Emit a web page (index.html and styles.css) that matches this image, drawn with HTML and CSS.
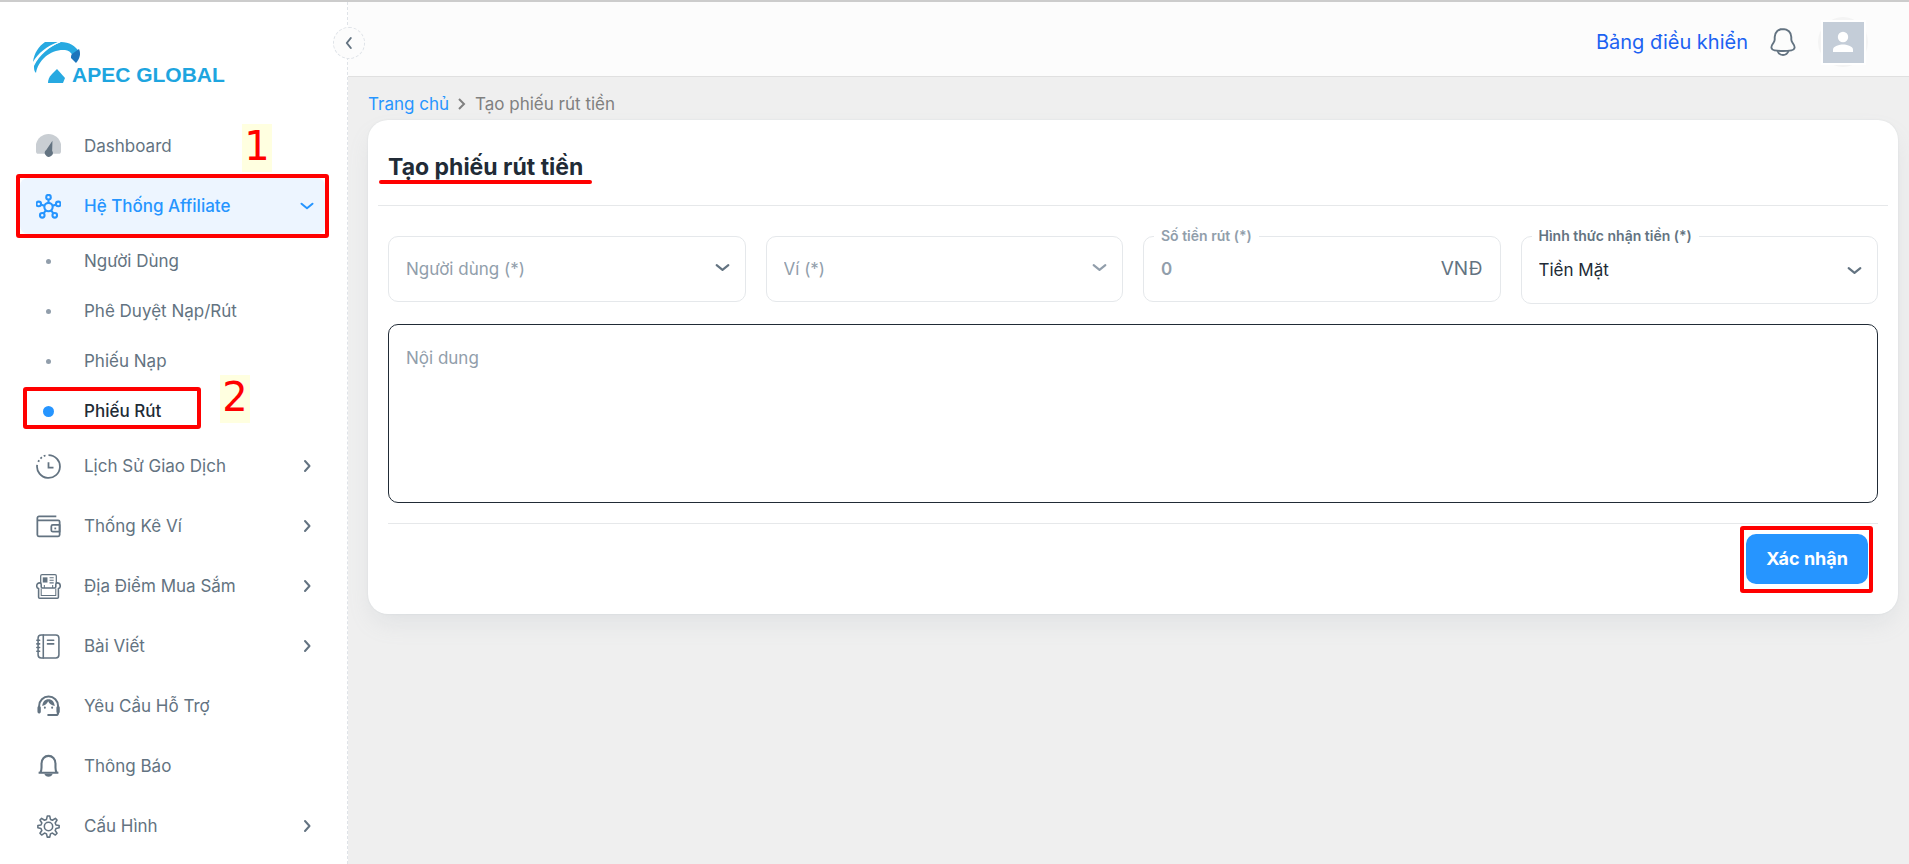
FILE: index.html
```html
<!DOCTYPE html>
<html lang="vi">
<head>
<meta charset="utf-8">
<meta name="viewport" content="width=device-width, initial-scale=1">
<title>Tạo phiếu rút tiền</title>
<link rel="stylesheet" href="styles.css">
</head>
<body>
<svg class="defs" aria-hidden="true">
  <symbol id="chev" viewBox="0 0 16 16"><path d="M6 3l4.500 5L6 13" fill="none" stroke="currentColor" stroke-width="2" stroke-linecap="round" stroke-linejoin="round"/></symbol>
  <symbol id="down" viewBox="0 0 16 16"><path d="M2.500 5.700L8 10.200l5.500-4.500" fill="none" stroke="currentColor" stroke-width="2" stroke-linecap="round" stroke-linejoin="round"/></symbol>
</svg>
<div class="app">
  <aside class="sidebar">
    <button class="collapse" type="button" aria-label="Thu gọn"><svg viewBox="0 0 16 16"><path d="M9.800 3L5.800 8l4 5" fill="none" stroke="currentColor" stroke-width="2" stroke-linecap="round" stroke-linejoin="round"/></svg></button>
    <a class="logo" href="#">
      <svg viewBox="0 0 50 42" aria-hidden="true">
        <path d="M0 20C1 11 6 4 12 0h13C14 4 5 11 0 20z" fill="#27a9e1"/>
        <path d="M1 24C6 13 17 4 28 0c8 0 15 4 18 10l-6 4C38 10 35 8 32 8 18 7 5 18 3 31 1 29 1 27 1 24z" fill="#27a9e1"/>
        <path d="M1 22C7 11 16 4 27 0" fill="none" stroke="#fff" stroke-width="1"/>
        <path d="M46 7c2 5 1 9-3 14l-5-5c0-2 0-3 1-4z" fill="#1c75bc"/>
        <path d="M24 27l8 9-2 5H15c0-3 1-6 4-9z" fill="#27a9e1"/>
      </svg>
      <span>APEC GLOBAL</span>
    </a>
    <nav>
      <ul class="menu">
        <li><a class="item" href="#">
          <svg class="icon" viewBox="0 0 24 24"><path d="M1.300 19A2 2 0 0 1 .2 17.800C-2.500 8.500 3.500 0 12 0s14.500 8.500 11.800 17.800a2 2 0 0 1-1.100 1.200z" fill="#c9ced3"/><path d="M15.800 6.500l-.3 9.500a3.800 3.800 0 1 1-5.500-1z" fill="#637381"/></svg>
          <span>Dashboard</span></a><b class="note note-one">1</b></li>
        <li><a class="item active" href="#">
          <svg class="icon" viewBox="0 0 24 24" fill="none" stroke="currentColor" stroke-width="2"><circle cx="12" cy="12.500" r="4"/><circle cx="12" cy="3" r="2.200"/><circle cx="2.600" cy="9.500" r="2.200"/><circle cx="21.400" cy="9.500" r="2.200"/><circle cx="6" cy="20.500" r="2.200"/><circle cx="18" cy="20.500" r="2.200"/><path d="M12 5.200v3.300M5 10.300l3.200 1M19 10.300l-3.200 1M7.300 18.700l2.200-3M16.700 18.700l-2.200-3"/></svg>
          <span>Hệ Thống Affiliate</span><svg class="arrow"><use href="#down"/></svg></a><i class="mark mark-group"></i>
          <ul class="sub">
            <li><a href="#"><i class="dot"></i><span>Người Dùng</span></a></li>
            <li><a href="#"><i class="dot"></i><span>Phê Duyệt Nạp/Rút</span></a></li>
            <li><a href="#"><i class="dot"></i><span>Phiếu Nạp</span></a></li>
            <li><a class="current" href="#"><i class="dot"></i><span>Phiếu Rút</span></a><i class="mark mark-child"></i><b class="note note-two">2</b></li>
          </ul>
        </li>
        <li><a class="item" href="#">
          <svg class="icon" viewBox="0 0 24 24" fill="none" stroke="currentColor" stroke-width="1.700"><path d="M12 1a11 11 0 1 1-10.900 9.500"/><path d="M2.200 7.500A11 11 0 0 1 10 1.200" stroke-dasharray="1.800 2"/><path d="M12 8v5h4.800"/></svg>
          <span>Lịch Sử Giao Dịch</span><svg class="arrow"><use href="#chev"/></svg></a></li>
        <li><a class="item" href="#">
          <svg class="icon" viewBox="0 0 24 24" fill="none" stroke="currentColor" stroke-width="1.700" stroke-linejoin="round"><path d="M19.500 2.300H3A1.600 1.600 0 0 0 1.300 4v16c0 .8.600 1.400 1.400 1.400h18.600c.8 0 1.400-.6 1.400-1.400V7.500c0-.8-.6-1.400-1.400-1.400H1.500"/><path d="M22.700 10.500h-6.500c-.9 0-1.500.6-1.500 1.500v3.500c0 .9.600 1.500 1.500 1.500h6.500z"/><path d="M18.500 13v1.700"/></svg>
          <span>Thống Kê Ví</span><svg class="arrow"><use href="#chev"/></svg></a></li>
        <li><a class="item" href="#">
          <svg class="icon" viewBox="0 0 24 24" fill="none" stroke="currentColor" stroke-width="1.500" stroke-linejoin="round"><path d="M4.500 9V2c0-.8.500-1.300 1.300-1.300h12.500c.7 0 1.200.5 1.200 1.300v7" stroke-width="1.200"/><path d="M3.500 23.200h17c.6 0 1-.5 1-1V14c1.200-.4 1.800-1.300 1.800-2.500 0-2-1.300-3-3-3-.8 0-1.300.7-1.300 1.600v2.200c0 .8-.5 1.200-1.200 1.200H6.200c-.7 0-1.200-.4-1.200-1.200v-2.200C5 9.200 4.500 8.500 3.700 8.500c-1.700 0-3 1-3 3 0 1.200.6 2.100 1.800 2.500v8.200c0 .5.400 1 1 1z"/><path d="M5 14v6.700h14V14M8 10.500v3M16 10.500v3M13 3.500h4M13 6h4M13 8.500h4" stroke-width="1"/><path d="M6.500 3.200h4.500v5H6.500z" fill="currentColor" stroke="none"/></svg>
          <span>Địa Điểm Mua Sắm</span><svg class="arrow"><use href="#chev"/></svg></a></li>
        <li><a class="item" href="#">
          <svg class="icon" viewBox="0 0 24 24" fill="none" stroke="currentColor" stroke-width="1.500" stroke-linecap="round"><rect x="2" y="1" width="20" height="22" rx="3"/><path d="M7 1v22M11 6h6M11 9.500h6M.8 6h2.700M.8 9.500h2.700M.8 13h2.700M.8 16.500h2.700"/></svg>
          <span>Bài Viết</span><svg class="arrow"><use href="#chev"/></svg></a></li>
        <li><a class="item" href="#">
          <svg class="icon" viewBox="0 0 24 24" fill="none" stroke="currentColor" stroke-width="1.900" stroke-linecap="round"><path d="M3 17.500V11.500a9 9 0 0 1 18.200 0v6.700c0 1.300-.7 2-2 2h-7.500"/><path d="M3 13v4M21.200 13v4" stroke-width="3.200"/><path d="M6 11.500c3-.8 4.800-2.300 5.700-4.500 1 2.300 3 3.800 6.300 4.500-.5-4-2.500-6.500-6-6.500s-5.600 2.500-6 6.500z" fill="currentColor" stroke="none"/><path d="M8.500 13v.3M15.500 13v.3"/></svg>
          <span>Yêu Cầu Hỗ Trợ</span></a></li>
        <li><a class="item" href="#">
          <svg class="icon" viewBox="0 0 24 24" fill="none" stroke="currentColor" stroke-width="2" stroke-linejoin="round"><path d="M4 18c1.200-1.200 1.300-3 1.300-5V9.300c0-4.500 3-7.500 6.700-7.500s6.700 3 6.700 7.500V13c0 2 .1 3.800 1.300 5M2.500 18h19"/><path d="M8 19h8c-.6 1.800-2 2.800-4 2.800S8.600 20.800 8 19z" fill="currentColor" stroke="none"/></svg>
          <span>Thông Báo</span></a></li>
        <li><a class="item" href="#">
          <svg class="icon" viewBox="0 0 24 24" fill="none" stroke="currentColor" stroke-width="1.500" stroke-linejoin="round"><circle cx="12" cy="12" r="4"/><path d="M10.800 2h2.400l.7 3.200 1.900.8 2.800-1.800 1.600 1.600L18.400 8.600l.8 1.900 3 .6v2.200l-3 .6-.8 1.900 1.800 2.700-1.600 1.700-2.800-1.900-1.900.8-.7 3.100h-2.400l-.7-3.100-1.900-.8-2.800 1.900-1.600-1.700 1.800-2.700-.8-1.900-3-.6v-2.200l3-.6.8-1.900-1.800-2.800 1.600-1.600L8.200 6l1.900-.8z"/></svg>
          <span>Cấu Hình</span><svg class="arrow"><use href="#chev"/></svg></a></li>
      </ul>
    </nav>
  </aside>
  <div class="page">
    <header class="topbar">
      <a class="dash" href="#">Bảng điều khiển</a>
      <button class="bell" type="button" aria-label="Thông báo"><svg viewBox="0 0 26 28" fill="none" stroke="currentColor" stroke-width="1.900" stroke-linejoin="round"><path d="M13 1c-4.700 0-8.300 3.300-8.300 8v2.500c0 1.200-.5 2.200-1.200 3.200C2.200 16.500 1 18 1.500 20c.4 1.500 1.500 2.200 3 2.400 5.500.7 11.500.7 17 0 1.500-.2 2.600-.9 3-2.400.5-2-.7-3.500-2-5.300-.7-1-1.200-2-1.200-3.200V9c0-4.700-3.600-8-8.300-8z"/><path d="M7.500 23c1 2.700 3 4 5.500 4s4.500-1.300 5.500-4"/></svg></button>
      <button class="avatar" type="button" aria-label="Tài khoản"><svg viewBox="0 0 41 41"><path d="M0 0h41v41H0z" fill="#c4cdd8"/><circle cx="20" cy="15" r="5.200" fill="#fff"/><path d="M10 30v-2.500c0-3.300 6.700-5 10-5s10 1.700 10 5V30z" fill="#fff"/></svg></button>
    </header>
    <main class="content">
      <nav class="crumbs" aria-label="Đường dẫn">
        <a href="#">Trang chủ</a>
        <svg viewBox="0 0 16 16"><path d="M5 3l5 5-5 5" fill="none" stroke="currentColor" stroke-width="2"/></svg>
        <span>Tạo phiếu rút tiền</span>
      </nav>
      <form class="card">
        <div class="card-head"><h1>Tạo phiếu rút tiền</h1></div>
        <div class="card-body">
          <div class="fields">
            <div class="field">
              <select id="user" aria-label="Người dùng (*)"><option>Người dùng (*)</option></select>
              <svg class="caret"><use href="#down"/></svg>
            </div>
            <div class="field muted">
              <select id="wallet" aria-label="Ví (*)"><option>Ví (*)</option></select>
              <svg class="caret"><use href="#down"/></svg>
            </div>
            <div class="field money">
              <label for="amount">Số tiền rút (*)</label>
              <input id="amount" type="text" inputmode="numeric" placeholder="0">
              <span>VNĐ</span>
            </div>
            <div class="field chosen">
              <label for="method">Hình thức nhận tiền (*)</label>
              <select id="method"><option>Tiền Mặt</option></select>
              <svg class="caret"><use href="#down"/></svg>
            </div>
          </div>
          <textarea aria-label="Nội dung" placeholder="Nội dung"></textarea>
          <div class="actions"><div class="submit"><button type="submit">Xác nhận</button><i class="mark mark-submit"></i></div></div>
        </div>
      </form>
    </main>
  </div>
</div>
</body>
</html>
```
FILE: styles.css
```css
* { box-sizing: border-box; }
body {
  margin: 0;
  border-top: 2px solid #ccc;
  background: #efefef;
  color: #212b36;
  font: 17px/24px Inter, "Noto Sans", sans-serif;
}
a { color: inherit; text-decoration: none; }
ul { list-style: none; margin: 0; padding: 0; }
button, input, select, textarea { font: inherit; color: inherit; }
button { border: 0; padding: 0; background: none; cursor: pointer; }
.defs { display: none; }
.app { display: flex; min-height: calc(100vh - 2px); }

.sidebar {
  position: relative;
  flex: 0 0 348px;
  padding: 40px 22px 8px 20px;
  border-right: 1px dashed #dfe3e8;
  background: #fff;
  color: #637381;
}
.collapse {
  position: absolute;
  top: 25px;
  right: -18px;
  z-index: 2;
  display: grid;
  place-items: center;
  width: 32px;
  height: 32px;
  border: 1px dashed #dfe3e8;
  border-radius: 50%;
  background: #fcfcfc;
  color: #637381;
}
.collapse svg { width: 16px; height: 16px; }
.logo {
  display: flex;
  align-items: flex-end;
  height: 42px;
  margin: 0 0 32px 13px;
  color: #1ea5df;
  font: bold 21px/18px "Liberation Sans", Arial, sans-serif;
}
.logo svg { flex: none; width: 50px; height: 42px; margin-right: -11px; }

.menu > li { position: relative; padding: 2px 0; }
.item {
  display: flex;
  align-items: center;
  gap: 23px;
  height: 56px;
  padding: 0 10px 0 16px;
  border-radius: 8px;
}
.item span, .sub span { flex: 1; white-space: nowrap; }
.item.active { background: #edf5ff; color: #2695ff; font-weight: 500; }
.icon { flex: none; width: 25px; height: 25px; }
.arrow { flex: none; width: 16px; height: 16px; }
.sub { padding: 2px 0 0; margin-bottom: -2px; }
.sub li { position: relative; }
.sub a {
  display: flex;
  align-items: center;
  gap: 23px;
  height: 50px;
  padding-left: 16px;
}
.dot { display: grid; place-items: center; width: 25px; height: 24px; }
.dot::before { content: ""; width: 5px; height: 5px; border-radius: 50%; background: #919eab; }
.current { color: #212b36; font-weight: 500; }
.current .dot::before { width: 11px; height: 11px; background: #2695ff; }

/* Callouts drawn over the page */
.mark { position: absolute; border: 4px solid #f00; border-radius: 3px; pointer-events: none; }
.mark-group { top: -2px; left: -4px; right: -4px; height: 64px; }
.mark-child { top: 1px; left: 3px; width: 178px; height: 42px; }
.mark-submit { inset: -8px -5px -9px -6px; }
.note {
  position: absolute;
  width: 30px;
  height: 48px;
  background: #ffffe0;
  color: #f00;
  font: 40px/44px "DejaVu Sans", sans-serif;
  text-align: center;
}
.note-one { top: 8px; left: 222px; }
.note-two { top: -11px; left: 200px; }

.page { flex: 1; min-width: 0; }
.topbar {
  display: flex;
  align-items: center;
  justify-content: flex-end;
  height: 75px;
  padding: 6px 41px 0 20px;
  border-bottom: 1px solid #e0e0e0;
  background: #fcfcfc;
}
.dash { color: #1c62f2; font-size: 20px; }
.bell { margin: 0 22px; color: #637381; }
.bell svg { display: block; width: 26px; height: 28px; }
.avatar { display: grid; place-items: center; width: 50px; height: 50px; border-radius: 50%; background: #f4f4f4; }
.avatar svg { display: block; width: 45px; height: 45px; border: 2px solid #fff; }

.content { padding: 13px 11px 24px 20px; }
.crumbs { display: flex; align-items: center; gap: 5px; height: 28px; margin-bottom: 2px; color: #808080; }
.crumbs a { color: #2695ff; }
.crumbs svg { width: 16px; height: 16px; }

.card {
  border-radius: 20px;
  background: #fff;
  box-shadow: 0 0 2px rgba(145, 158, 171, .2), 0 12px 24px -4px rgba(145, 158, 171, .16);
}
.card-head { height: 86px; margin: 0 10px; padding: 33px 10px 0; border-bottom: 1px solid #e6e8ea; }
.card h1 { position: relative; width: max-content; margin: 0; font-size: 23px; line-height: 28px; font-weight: 700; }
.card h1::after {
  content: "";
  position: absolute;
  left: -9px;
  right: -9px;
  top: 27px;
  height: 4px;
  border-radius: 2px;
  background: #f00;
}
.card-body { padding: 30px 20px; }
.fields { display: grid; grid-template-columns: repeat(4, minmax(0, 1fr)); align-items: start; gap: 20px; }
.field {
  position: relative;
  display: flex;
  align-items: center;
  height: 66px;
  border: 1px solid #e5e8eb;
  border-radius: 10px;
  color: #637381;
}
.field label {
  position: absolute;
  top: -11px;
  left: 10px;
  padding: 0 7px;
  background: #fff;
  font-size: 14px;
  line-height: 20px;
  font-weight: 600;
}
.field select, .field input {
  flex: 1;
  min-width: 0;
  height: 100%;
  padding: 0 17px;
  border: 0;
  outline: 0;
  background: none;
  appearance: none;
}
.field select { color: #919eab; }
.caret { position: absolute; right: 14px; top: 22px; width: 17px; height: 17px; pointer-events: none; }
.field.muted { color: #919eab; }
.money { padding-right: 17px; }
.money label { color: #919eab; }
.money input { font-weight: 600; }
.money input::placeholder { color: #919eab; opacity: 1; }
.money span { font-size: 19px; }
.field.chosen { height: 68px; }
.chosen select { color: #212b36; }
.chosen .caret { top: 25px; }
textarea {
  display: block;
  width: 100%;
  height: 179px;
  margin: 20px 0;
  padding: 21px 17px;
  border: 1px solid #212b36;
  border-radius: 10px;
  outline: 0;
  background: none;
  resize: none;
}
textarea::placeholder { color: #919eab; opacity: 1; }
.actions { display: flex; justify-content: flex-end; padding: 10px 10px 0 0; border-top: 1px solid #e6e8ea; }
.submit { position: relative; }
.submit button {
  display: block;
  height: 50px;
  padding: 0 20px;
  border-radius: 10px;
  background: #2695ff;
  color: #fff;
  font-size: 18px;
  font-weight: 700;
}
```
